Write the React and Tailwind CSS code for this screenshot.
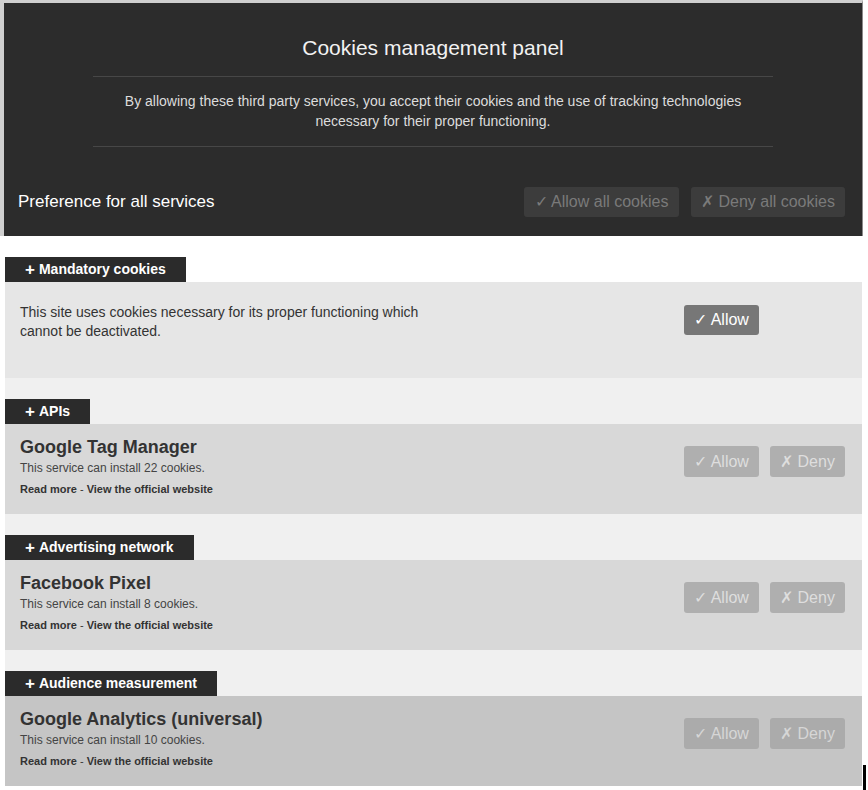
import React from 'react'

const services = [
  { group: 'APIs', name: 'Google Tag Manager', count: 22, bg: 'bg-[#d8d8d8]', btn: 'bg-[#afafaf] text-[#dedede]' },
  { group: 'Advertising network', name: 'Facebook Pixel', count: 8, bg: 'bg-[#d8d8d8]', btn: 'bg-[#afafaf] text-[#dedede]' },
  { group: 'Audience measurement', name: 'Google Analytics (universal)', count: 10, bg: 'bg-[#c5c5c5]', btn: 'bg-[#ababab] text-[#d6d6d6]' },
]

const Tab = ({ children }) => (
  <div className="inline-flex h-[25px] items-center bg-[#2b2b2b] pl-[20px] pr-[20px] text-[14px] font-bold text-white">
    <span className="mr-[4px] text-[17px] font-bold leading-none">+</span>
    {children}
  </div>
)

const App = () => {
  return (
    <div className="relative min-h-[790px] bg-white font-['Liberation_Sans',Arial,sans-serif]">
      <header className="w-[863px] border-t-[3px] border-l-[4px] border-r border-t-[#d0d0d0] border-l-[#d0d0d0] border-r-[#8a8a8a] bg-[#2c2c2c]">
        <div className="pt-[33px] text-center text-[21px] leading-[24px] text-[#f2f2f2]">Cookies management panel</div>
        <div className="mx-auto mt-[16px] w-[680px] border-t border-[#474747]" />
        <p className="mx-auto w-[680px] pt-[14px] text-center text-[14px] leading-[20px] text-[#dcdcdc]">
          By allowing these third party services, you accept their cookies and the use of tracking technologies necessary for their proper functioning.
        </p>
        <div className="mx-auto mt-[15px] w-[680px] border-t border-[#474747]" />
        <div className="flex items-center justify-between pt-[40px] pb-[19px] pl-[14px] pr-[17px]">
          <span className="text-[17px] text-white">Preference for all services</span>
          <div className="flex gap-[12px]">
            <button className="h-[30px] w-[155px] rounded-[3px] bg-[#3c3c3c] text-[16px] text-[#7a7a7a]">✓ Allow all cookies</button>
            <button className="h-[30px] w-[154px] rounded-[3px] bg-[#3c3c3c] text-[16px] text-[#7a7a7a]">✗ Deny all cookies</button>
          </div>
        </div>
      </header>

      <div className="ml-[5px] w-[857px]">
        <div className="pt-[21px]">
          <Tab>Mandatory cookies</Tab>
          <div className="flex h-[96px] items-start justify-between bg-[#e6e6e6] pl-[15px] pr-[17px] pt-[21px]">
            <p className="w-[420px] text-[14px] leading-[19px] text-[#333]">
              This site uses cookies necessary for its proper functioning which cannot be deactivated.
            </p>
            <div className="mr-[86px] mt-[2px] flex h-[30px] w-[75px] items-center justify-center rounded-[3px] bg-[#777] text-[16px] text-white">
              ✓ Allow
            </div>
          </div>
        </div>

        <div className="bg-[#f0f0f0]">
          {services.map((s) => (
            <div key={s.name} className="pt-[21px]">
              <Tab>{s.group}</Tab>
              <div className={`flex justify-between pl-[15px] pr-[17px] pt-[12px] pb-[18px] ${s.bg}`}>
                <div>
                  <div className="text-[18px] font-bold leading-[22px] text-[#333]">{s.name}</div>
                  <div className="mt-[3px] text-[12px] leading-[14px] text-[#444]">This service can install {s.count} cookies.</div>
                  <div className="mt-[7px] text-[11px] font-bold leading-[14px] text-[#333]">
                    Read more <span className="font-normal">-</span> View the official website
                  </div>
                </div>
                <div className="mt-[10px] flex gap-[11px]">
                  <button className={`h-[31px] w-[75px] rounded-[3px] text-[16px] ${s.btn}`}>✓ Allow</button>
                  <button className={`h-[31px] w-[75px] rounded-[3px] text-[16px] ${s.btn}`}>✗ Deny</button>
                </div>
              </div>
            </div>
          ))}
        </div>
      </div>

      <div className="absolute left-[863px] top-[765px] h-[25px] w-[3px] bg-black" />
    </div>
  )
}

export default App
